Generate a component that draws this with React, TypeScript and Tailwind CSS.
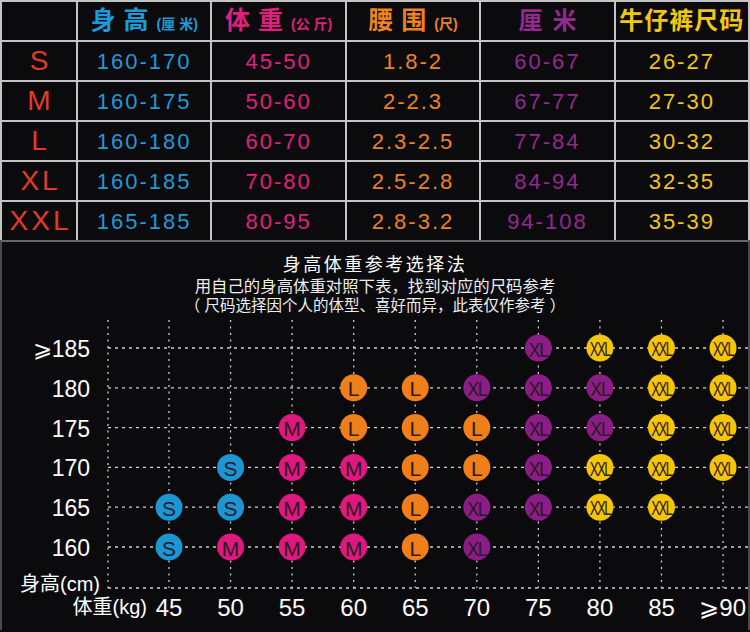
import React from "react";

const COLORS: Record<string, string> = {
  S: "#1b95d4",
  M: "#e0177f",
  L: "#ef7f1a",
  XL: "#8c1d87",
  XXL: "#f7c400",
};

const rows = [
  ["S", "160-170", "45-50", "1.8-2", "60-67", "26-27"],
  ["M", "160-175", "50-60", "2-2.3", "67-77", "27-30"],
  ["L", "160-180", "60-70", "2.3-2.5", "77-84", "30-32"],
  ["XL", "160-185", "70-80", "2.5-2.8", "84-94", "32-35"],
  ["XXL", "165-185", "80-95", "2.8-3.2", "94-108", "35-39"],
];

const colColors = ["text-[#e23a26]", "text-[#1d9ad8]", "text-[#e0207f]", "text-[#ee8220]", "text-[#922a8e]", "text-[#f5c514]"];

const heights = ["⩾185", "180", "175", "170", "165", "160"];
const weights = ["45", "50", "55", "60", "65", "70", "75", "80", "85", "⩾90"];

// rows 185..160, cols 45..90
const matrix: (string | null)[][] = [
  [null, null, null, null, null, null, "XL", "XXL", "XXL", "XXL"],
  [null, null, null, "L", "L", "XL", "XL", "XL", "XXL", "XXL"],
  [null, null, "M", "L", "L", "L", "XL", "XL", "XXL", "XXL"],
  [null, "S", "M", "M", "L", "L", "XL", "XXL", "XXL", "XXL"],
  ["S", "S", "M", "M", "L", "XL", "XL", "XXL", "XXL", null],
  ["S", "M", "M", "M", "L", "XL", null, null, null, null],
];

const font = "'Liberation Sans', 'Noto Sans CJK SC', sans-serif";

function Chart() {
  const ox = 2;
  const oy = 318;
  const colX = (i: number) => 169 + 61.56 * i - ox;
  const rowY = (j: number) => 350 + 39.8 * j - oy;
  const axisX = 108 - ox;
  const axisY = 590 - oy;
  const topY = 322 - oy;
  const rightX = 748 - ox;
  const lineColor = "#cfcfcf";
  return (
    <svg width={746} height={314} viewBox="0 0 746 314" className="block" style={{ fontFamily: font }}>
      <line x1={axisX} y1={topY} x2={axisX} y2={axisY} stroke={lineColor} strokeWidth={1.3} strokeDasharray="2 4.5" />
      {weights.map((_, i) => (
        <line key={"v" + i} x1={colX(i)} y1={topY} x2={colX(i)} y2={axisY} stroke={lineColor} strokeWidth={1.3} strokeDasharray="2 4.5" />
      ))}
      {heights.map((_, j) => (
        <line key={"h" + j} x1={axisX} y1={rowY(j)} x2={rightX} y2={rowY(j)} stroke={lineColor} strokeWidth={1.3} strokeDasharray="3 4" />
      ))}
      <line x1={axisX} y1={axisY} x2={rightX} y2={axisY} stroke={lineColor} strokeWidth={1.3} strokeDasharray="3 4" />
      {heights.map((h, j) => (
        <text key={"yl" + j} x={90 - ox} y={rowY(j) + 1} textAnchor="end" dominantBaseline="central" fill="#ffffff" fontSize={23}>
          {h}
        </text>
      ))}
      {weights.map((w, i) => (
        <text
          key={"xl" + i}
          x={i === 9 ? 746 - ox : colX(i)}
          y={609 - oy}
          textAnchor={i === 9 ? "end" : "middle"}
          dominantBaseline="central"
          fill="#ffffff"
          fontSize={24}
        >
          {w}
        </text>
      ))}
      <text x={100 - ox} y={586 - oy} textAnchor="end" dominantBaseline="central" fill="#ffffff" fontSize={20}>
        身高(cm)
      </text>
      <text x={147 - ox} y={609 - oy} textAnchor="end" dominantBaseline="central" fill="#ffffff" fontSize={20}>
        体重(kg)
      </text>
      {matrix.map((row, j) =>
        row.map((s, i) => {
          if (!s) return null;
          const cx = colX(i);
          const cy = rowY(j);
          const sx = s === "XXL" ? 0.63 : s === "XL" ? 0.85 : 1;
          return (
            <g key={`c${j}-${i}`}>
              <circle cx={cx} cy={cy} r={13.5} fill={COLORS[s]} />
              <text
                x={0}
                y={1}
                transform={`translate(${cx} ${cy}) scale(${sx} 1)`}
                textAnchor="middle"
                dominantBaseline="central"
                fill="#2a1b1e"
                fontSize={21}
                letterSpacing={s === "XXL" ? -2.5 : s === "XL" ? -1.5 : 0}
              >
                {s}
              </text>
            </g>
          );
        })
      )}
    </svg>
  );
}

function Head({ big, small, color, spacing }: { big: string; small?: string; color: string; spacing: string }) {
  return (
    <div className={`bg-[#0b0b0d] flex items-center justify-center ${color}`}>
      <span className="flex items-baseline">
        <span className={`text-[25px] font-bold ${spacing}`}>{big}</span>
        {small && <span className="text-[14px] font-bold">{small}</span>}
      </span>
    </div>
  );
}

export default function App() {
  return (
    <div className="w-[750px] h-[632px] overflow-hidden bg-[#0b0b0d]" style={{ fontFamily: font }}>
      <div className="grid grid-cols-[74px_repeat(5,1fr)] grid-rows-[repeat(6,38px)] gap-[2px] bg-[#c4c4c4] p-[2px] pb-0">
        <div className="bg-[#0b0b0d]" />
        <Head big="身高" small="(厘 米)" color="text-[#1d9ad8]" spacing="tracking-[8px]" />
        <Head big="体重" small="(公 斤)" color="text-[#e0207f]" spacing="tracking-[8px]" />
        <Head big="腰围" small="(尺)" color="text-[#ee8220]" spacing="tracking-[8px]" />
        <div className="bg-[#0b0b0d] flex items-center justify-center text-[#922a8e]">
          <span className="text-[24px] font-bold tracking-[10px] pl-[10px]">厘米</span>
        </div>
        <div className="bg-[#0b0b0d] flex items-center justify-center text-[#f5c514]">
          <span className="text-[24px] font-bold tracking-[1px]">牛仔裤尺码</span>
        </div>
        {rows.map((r) =>
          r.map((c, ci) => (
            <div
              key={r[0] + ci}
              className={`bg-[#0b0b0d] flex items-center justify-center ${colColors[ci]} ${
                ci === 0 ? "text-[28px] tracking-[3px] pl-[3px]" : "text-[22px] tracking-[2px]"
              }`}
            >
              {c}
            </div>
          ))
        )}
      </div>
      <div className="h-[390px] border-t-2 border-x-2 border-t-[#666666] border-x-[#4a4a4a] flex flex-col">
        <div className="h-[74px] pt-[12px] flex flex-col items-center text-white">
          <div className="h-[22px] leading-[22px] text-[18px] tracking-[2.5px]">身高体重参考选择法</div>
          <div className="h-[20px] leading-[20px] text-[16.4px] text-[#eeeeee]">用自己的身高体重对照下表，找到对应的尺码参考</div>
          <div className="h-[20px] leading-[20px] text-[15.5px] text-[#eeeeee] whitespace-pre">（ 尺码选择因个人的体型、喜好而异，此表仅作参考 ）</div>
        </div>
        <Chart />
      </div>
    </div>
  );
}
